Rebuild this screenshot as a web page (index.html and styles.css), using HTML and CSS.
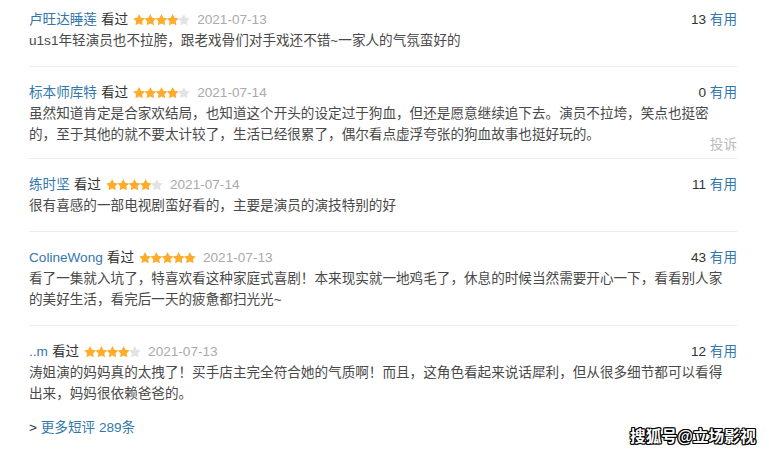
FILE: index.html
```html
<!DOCTYPE html>
<html lang="zh-CN">
<head>
    <meta charset="UTF-8">
    <title>短评</title>
    <link rel="stylesheet" href="styles.css">
</head>
<body>
    <div class="comment-list">
        <div class="comment-item">
            <div class="comment-info">
                <a class="user" href="#">卢旺达睡莲</a>
                <span class="watched">看过</span>
                <svg class="stars" viewBox="-0.5 0 57 12"><use href="#s4"/></svg>
                <span class="date">2021-07-13</span>
                <span class="votes"><span class="num">13</span> <a href="#">有用</a></span>
            </div>
            <p class="short">u1s1年轻演员也不拉胯，跟老戏骨们对手戏还不错~一家人的气氛蛮好的</p>
        </div>

        <div class="comment-item with-report">
            <div class="comment-info">
                <a class="user" href="#">标本师库特</a>
                <span class="watched">看过</span>
                <svg class="stars" viewBox="-0.5 0 57 12"><use href="#s4"/></svg>
                <span class="date">2021-07-14</span>
                <span class="votes"><span class="num">0</span> <a href="#">有用</a></span>
            </div>
            <p class="short">虽然知道肯定是合家欢结局，也知道这个开头的设定过于狗血，但还是愿意继续追下去。演员不拉垮，笑点也挺密的，至于其他的就不要太计较了，生活已经很累了，偶尔看点虚浮夸张的狗血故事也挺好玩的。</p>
            <div class="report">投诉</div>
        </div>

        <div class="comment-item">
            <div class="comment-info">
                <a class="user" href="#">练时坚</a>
                <span class="watched">看过</span>
                <svg class="stars" viewBox="-0.5 0 57 12"><use href="#s4"/></svg>
                <span class="date">2021-07-14</span>
                <span class="votes"><span class="num">11</span> <a href="#">有用</a></span>
            </div>
            <p class="short">很有喜感的一部电视剧蛮好看的，主要是演员的演技特别的好</p>
        </div>

        <div class="comment-item">
            <div class="comment-info">
                <a class="user" href="#">ColineWong</a>
                <span class="watched">看过</span>
                <svg class="stars" viewBox="-0.5 0 57 12"><use href="#s5"/></svg>
                <span class="date">2021-07-13</span>
                <span class="votes"><span class="num">43</span> <a href="#">有用</a></span>
            </div>
            <p class="short">看了一集就入坑了，特喜欢看这种家庭式喜剧！本来现实就一地鸡毛了，休息的时候当然需要开心一下，看看别人家的美好生活，看完后一天的疲惫都扫光光~</p>
        </div>

        <div class="comment-item last">
            <div class="comment-info">
                <a class="user" href="#">..m</a>
                <span class="watched">看过</span>
                <svg class="stars" viewBox="-0.5 0 57 12"><use href="#s4"/></svg>
                <span class="date">2021-07-13</span>
                <span class="votes"><span class="num">12</span> <a href="#">有用</a></span>
            </div>
            <p class="short">涛姐演的妈妈真的太拽了！买手店主完全符合她的气质啊！而且，这角色看起来说话犀利，但从很多细节都可以看得出来，妈妈很依赖爸爸的。</p>
        </div>
    </div>

    <div class="more"><span class="arrow">&gt;</span> <a href="#">更多短评 289条</a></div>

    <div class="watermark">搜狐号@立场影视</div>

    <svg class="defs" width="0" height="0">
        <defs>
            <polygon id="star" points="5.6,0.1 7.48,3.71 11.5,4.38 8.64,7.29 9.24,11.32 5.6,9.5 1.96,11.32 2.56,7.29 -0.3,4.38 3.72,3.71"/>
            <g id="s4">
                <use href="#star" x="0" fill="#ffac2d"/>
                <use href="#star" x="11.2" fill="#ffac2d"/>
                <use href="#star" x="22.4" fill="#ffac2d"/>
                <use href="#star" x="33.6" fill="#ffac2d"/>
                <use href="#star" x="44.8" fill="#e3e3e3"/>
            </g>
            <g id="s5">
                <use href="#star" x="0" fill="#ffac2d"/>
                <use href="#star" x="11.2" fill="#ffac2d"/>
                <use href="#star" x="22.4" fill="#ffac2d"/>
                <use href="#star" x="33.6" fill="#ffac2d"/>
                <use href="#star" x="44.8" fill="#ffac2d"/>
            </g>
        </defs>
    </svg>
</body>
</html>
```

FILE: styles.css
```css
body {
    margin: 0;
    padding: 9px 32px 0 29px;
    font-family: "Liberation Sans", "Noto Sans CJK SC", sans-serif;
    font-size: 13.6px;
    line-height: 21px;
    color: #494949;
    background: #fff;
}
a {
    color: #37a;
    text-decoration: none;
}
.comment-item {
    padding: 15px 0;
    border-bottom: 1px solid #ececec;
}
.comment-item:first-child {
    padding-top: 0;
}
.comment-item.with-report {
    padding-bottom: 3px;
}
.comment-item.last {
    border-bottom: none;
    padding-bottom: 13px;
}
.comment-info {
    display: flex;
    align-items: center;
    height: 21px;
    white-space: nowrap;
}
.watched {
    margin-left: 4px;
    color: #333;
}
.stars {
    flex: none;
    width: 57px;
    height: 12px;
    margin-left: 5px;
}
.date {
    margin-left: 7px;
    color: #aaa;
}
.votes {
    margin-left: auto;
    color: #333;
}
.short {
    margin: 0;
    padding-right: 8px;
    word-break: break-all;
}
.report {
    text-align: right;
    color: #bbb;
    line-height: 20px;
    margin-top: -10px;
}
.more {
    color: #333;
}
.defs {
    position: absolute;
}
.watermark {
    position: absolute;
    left: 630px;
    top: 427px;
    font-size: 15.6px;
    font-weight: bold;
    line-height: 20px;
    color: #fff;
    letter-spacing: 0.2px;
    text-shadow: 1px 0 0 #000, -1px 0 0 #000, 0 1px 0 #000, 0 -1px 0 #000, 1px 1px 0 #000, -1px -1px 0 #000, 1px -1px 0 #000, -1px 1px 0 #000;
}
```
